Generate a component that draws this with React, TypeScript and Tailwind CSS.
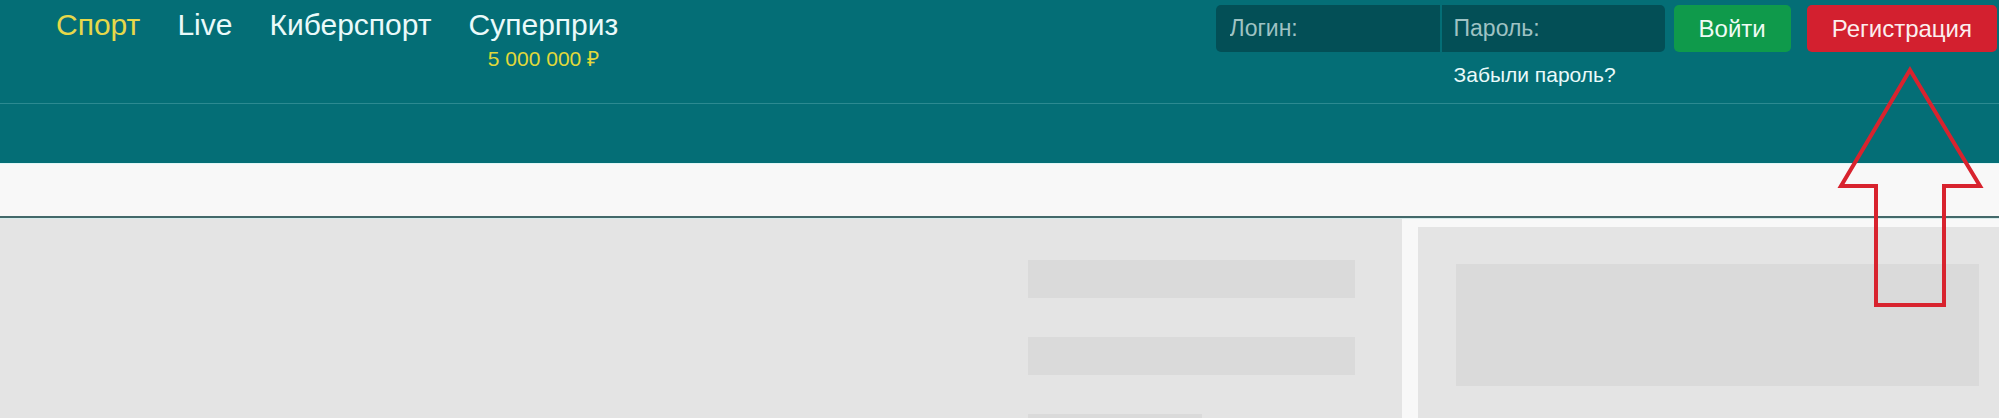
export default function App() {
  return (
    <div className="relative h-[418px] w-[1999px] overflow-hidden bg-[#e4e4e4] font-['Liberation_Sans',Arial,sans-serif]">
      {/* Header */}
      <header className="h-[163px] bg-[#046e76]">
        <div className="flex h-[104px] justify-between border-b border-[#2c8a91]">
          <nav className="flex items-start gap-[37px] pl-[56px] pt-[10px] text-[30px] leading-[30px] text-white">
            <a className="text-[#e6d84a]">Спорт</a>
            <a className="text-[#eafafa]">Live</a>
            <a className="text-[#eafafa]">Киберспорт</a>
            <div className="flex flex-col items-center">
              <a className="text-[#eafafa]">Суперприз</a>
              <span className="mt-[8px] text-[21px] leading-[21px] text-[#e2d93a]">5 000 000 ₽</span>
            </div>
          </nav>

          <div className="flex items-start pr-[2px] pt-[5px]">
            <div className="flex flex-col">
              <div className="flex h-[47px]">
                <input
                  placeholder="Логин:"
                  className="h-full w-[224px] rounded-l-[5px] bg-[#034f56] px-[14px] text-[23px] text-white outline-none placeholder:text-[#9fc2c3]"
                />
                <input
                  placeholder="Пароль:"
                  className="ml-[2px] h-full w-[223px] rounded-r-[5px] bg-[#034f56] px-[12px] text-[23px] text-white outline-none placeholder:text-[#9fc2c3]"
                />
              </div>
              <a className="mt-[12px] pl-[238px] text-[21px] leading-[21px] text-[#eafafa]">Забыли пароль?</a>
            </div>
            <button className="ml-[9px] h-[47px] rounded-[5px] bg-[#0f9a4b] px-[25px] text-[24px] text-[#f0fbf4]">
              Войти
            </button>
            <button className="ml-[16px] h-[47px] rounded-[5px] bg-[#d3202f] px-[25px] text-[24px] text-[#fbeeee]">
              Регистрация
            </button>
          </div>
        </div>
      </header>

      {/* Sub bar */}
      <div className="h-[55px] border-t border-[#dff6f6] border-b-2 border-b-[#43696a] bg-[#f8f8f8]" />

      {/* Content */}
      <div className="flex h-[260px] border-t border-[#d6ecec]">
        <div className="flex flex-1 justify-end bg-[#e4e4e4] pr-[47px] pt-[41px]">
          <div className="flex w-[327px] flex-col gap-[39px]">
            <div className="h-[38px] shrink-0 bg-[#dadada]" />
            <div className="h-[38px] shrink-0 bg-[#dadada]" />
            <div className="h-[38px] w-[174px] shrink-0 bg-[#dadada]" />
          </div>
        </div>
        <div className="w-[597px] bg-[#f8f8f8] pl-[16px] pt-[8px]">
          <div className="h-full bg-[#e4e4e4] pl-[38px] pr-[20px] pt-[37px]">
            <div className="h-[122px] bg-[#dadada]" />
          </div>
        </div>
      </div>

      {/* Annotation arrow */}
      <svg className="absolute left-0 top-0" width="1999" height="418" viewBox="0 0 1999 418" fill="none">
        <polygon
          points="1910,70 1980,186 1944,186 1944,305 1876,305 1876,186 1841,186"
          stroke="#d8232e"
          strokeWidth="4"
          strokeLinejoin="miter"
        />
      </svg>
    </div>
  );
}
